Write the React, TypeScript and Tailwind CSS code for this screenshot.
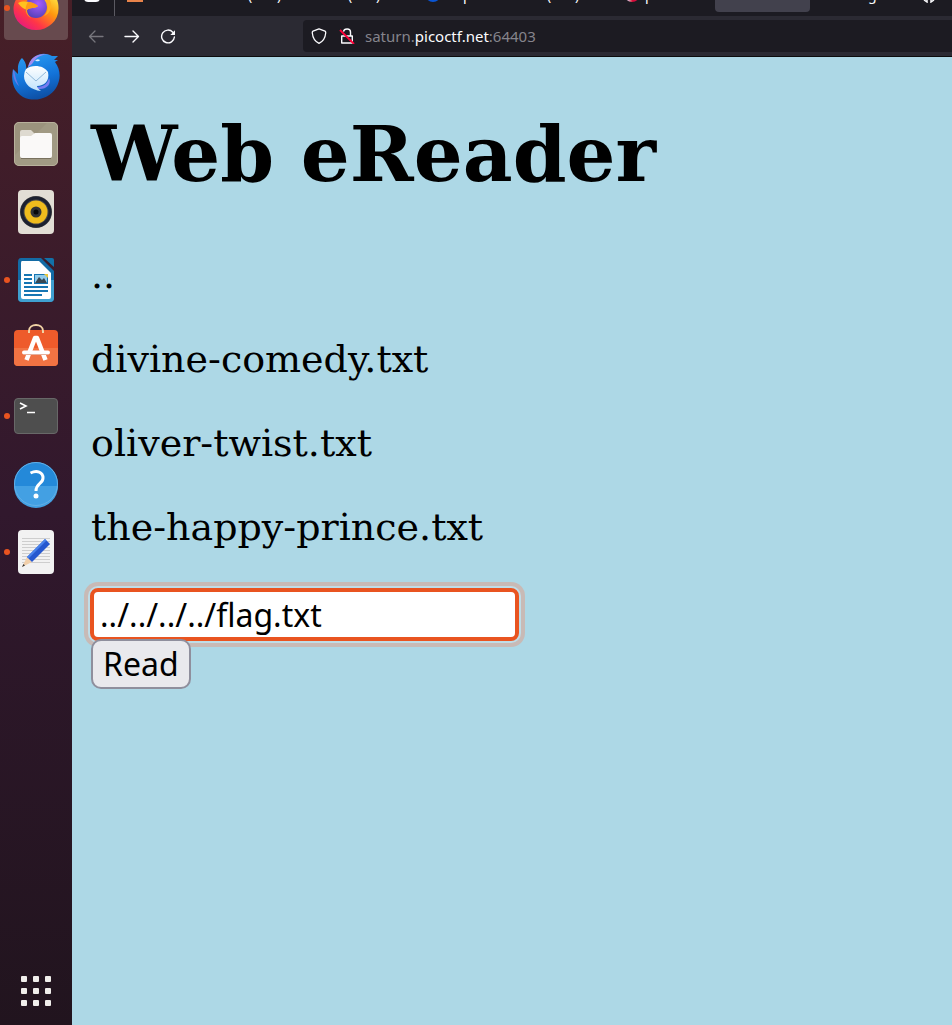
import type { ReactNode } from "react";

type TabMark = { left: string; text: string };

const tabMarks: TabMark[] = [
  { left: "left-[176px]", text: "(" },
  { left: "left-[205px]", text: ")" },
  { left: "left-[276px]", text: "(" },
  { left: "left-[304px]", text: ")" },
  { left: "left-[391px]", text: "p" },
  { left: "left-[475px]", text: "(" },
  { left: "left-[503px]", text: ")" },
  { left: "left-[573px]", text: "p" },
  { left: "left-[796px]", text: "g" },
];

function TabStrip() {
  return (
    <div className="relative h-4 shrink-0 overflow-hidden bg-[#1c1b22] font-['Noto_Sans',sans-serif] text-sm text-[#fbfbfe]">
      <span className="absolute -top-2 left-3 h-[10px] w-4 rounded-sm border-2 border-[#fbfbfe] bg-[#85848c]" />
      <span className="absolute left-[42px] top-0 h-4 w-px bg-[#5b5a62]" />
      <span className="absolute left-[55px] top-0 h-[2px] w-4 bg-[#e8834a]" />
      <span className="absolute -top-[14px] left-[353px] size-4 rounded-full bg-[#0a55d4]" />
      <span className="absolute -top-[14px] left-[552px] size-4 rounded-full bg-linear-to-r from-[#d9a7c4] from-30% to-[#d80b3c] to-50%" />
      <span className="absolute -top-3 left-[643px] h-6 w-[95px] rounded bg-[#42414d]" />
      <svg className="absolute left-[850px] top-0" width="16" height="3" aria-hidden="true">
        <path d="M2 0L5 2V0M9 0V2L12 0" stroke="#fbfbfe" strokeWidth="1.500" fill="none" />
      </svg>
      {tabMarks.map((mark) => (
        <span key={mark.left} className={`absolute -top-[15px] leading-5 ${mark.left}`}>
          {mark.text}
        </span>
      ))}
    </div>
  );
}

function Toolbar() {
  return (
    <nav className="flex h-10 shrink-0 items-center bg-[#2b2a33] text-[#fbfbfe]">
      <button aria-label="Back" className="ml-4 flex size-4 items-center justify-center text-[#77767d]">
        <svg width="16" height="16" fill="none" stroke="currentColor" strokeWidth="1.3" strokeLinecap="round" strokeLinejoin="round">
          <path d="M15 8.500H1.500M7 3L1.500 8.500L7 14" />
        </svg>
      </button>
      <button aria-label="Forward" className="ml-5 flex size-4 items-center justify-center">
        <svg width="16" height="16" fill="none" stroke="currentColor" strokeWidth="1.400" strokeLinecap="round" strokeLinejoin="round">
          <path d="M1 8.500H14.500M9 3L14.500 8.500L9 14" />
        </svg>
      </button>
      <button aria-label="Reload" className="ml-5 flex size-4 items-center justify-center">
        <svg width="16" height="16" fill="none" stroke="currentColor" strokeWidth="1.400" strokeLinecap="round">
          <path d="M12.800 4.200A6.400 6.400 0 1 0 14.400 9" />
          <path d="M15 2.300V6.500a.5.500 0 0 1-.5.500H10.300z" fill="currentColor" stroke="none" />
        </svg>
      </button>
      <div className="ml-[127px] flex h-8 flex-1 items-center rounded-l bg-[#1c1b22] pl-2">
        <svg width="16" height="16" fill="none" stroke="currentColor" strokeWidth="1.300" strokeLinejoin="round" aria-hidden="true">
          <path d="M8 .8L14 3.200C14.800 3.600 14.800 4 14.700 5C14.300 9.500 12 13.500 8 15.300C4 13.500 1.700 9.500 1.300 5C1.200 4 1.200 3.600 2 3.200Z" />
        </svg>
        <svg className="ml-3" width="16" height="16" fill="none" stroke="currentColor" strokeWidth="1.400" strokeLinejoin="round" aria-hidden="true">
          <path d="M4.500 3.700C5 0 11.500 0 11.500 4V8M2.700 8H13.300V15H2.700Z" />
          <path d="M1 2L15 16" stroke="#ff0039" strokeWidth="1.800" />
        </svg>
        <p className="ml-[10px] font-['Noto_Sans',sans-serif] text-[15px] text-[#85848c]">
          saturn.<span className="text-[#fbfbfe]">picoctf.net</span>:64403
        </p>
      </div>
    </nav>
  );
}

function FirefoxIcon() {
  return (
    <svg width="48" height="48" viewBox="0 0 48 48" aria-hidden="true">
      <defs>
        <linearGradient id="ff-body" x1="1" y1="0" x2="0.200" y2="1">
          <stop offset="0.100" stopColor="#fff44f" />
          <stop offset="0.450" stopColor="#ff980e" />
          <stop offset="0.750" stopColor="#ff3647" />
          <stop offset="1" stopColor="#e31587" />
        </linearGradient>
        <radialGradient id="ff-core" cx="0.600" cy="0.350" r="0.700">
          <stop offset="0" stopColor="#a75cff" />
          <stop offset="1" stopColor="#5340b5" />
        </radialGradient>
      </defs>
      <path d="M24 3C38 2 47 12 46.500 25A22.500 21 0 0 1 1.500 25C1.500 16 8 6 24 3Z" fill="url(#ff-body)" />
      <circle cx="24" cy="23" r="11" fill="url(#ff-core)" />
      <path d="M26 12C36 12 39 25 32 32C40 29 42 18 34 11Z" fill="#ffb01f" />
      <path d="M6 19C12 16 20 18 26 22C23 25 18 23 15 26C12 25 9 23 6 19Z" fill="#ffc21f" />
      <path d="M15 26C18 23 22 25 26 22C24 20 20 18 16 18C12 24 13 31 19 34C16 31 15 29 15 26Z" fill="#ff9a18" />
    </svg>
  );
}

function ThunderbirdIcon() {
  return (
    <svg width="48" height="48" viewBox="0 0 48 48" aria-hidden="true">
      <defs>
        <linearGradient id="tb-body" x1="0.300" y1="0" x2="0.600" y2="1">
          <stop stopColor="#2a9cf2" />
          <stop offset="0.550" stopColor="#1373d9" />
          <stop offset="1" stopColor="#0d4da1" />
        </linearGradient>
        <linearGradient id="tb-mail" x1="0" y1="0" x2="0" y2="1">
          <stop stopColor="#fff" />
          <stop offset="1" stopColor="#bfe2fc" />
        </linearGradient>
      </defs>
      <path d="M10 6C5 11 6 17 6 22L1 17C-1 27 0 38 11 45C23 51 38 46 44 36C49 28 49 18 43 10L46 8H42L46 4H40C31 -1 20 3 17 13L14 18C15 13 13 9 10 6Z" fill="url(#tb-body)" />
      <path d="M16 15C18 5 26 0 38 3C30 2 25 4 20 12Z" fill="#a18cf0" />
      <path d="M1 19C1 25 3 31 7 34C4 29 3 23 2 18Z" fill="#6c7ae6" />
      <path d="M25 35C32 35 36 31 37 26C40 32 34 38 26 37Z" fill="#757cf0" />
      <path d="M14 17C20 12 32 13 36 20C38 29 32 34 25 34Q25 36 29 39C19 38 12 32 12 24Q12 20 14 17Z" fill="url(#tb-mail)" />
      <path d="M14 20L24 29L34 20" fill="none" stroke="#90b8d9" />
      <path d="M23 9Q25 6 28 8Q27 10 24 9" fill="#d8f0ff" />
    </svg>
  );
}

function FilesIcon() {
  return (
    <svg width="48" height="48" viewBox="0 0 48 48" aria-hidden="true">
      <rect x="2" y="2" width="44" height="44" rx="5" fill="#9b937d" />
      <path d="M3 35L35 3H41A4 4 0 0 1 45 7V41A4 4 0 0 1 41 45H7A4 4 0 0 1 3 41Z" fill="#a19a84" />
      <rect x="2.500" y="2.500" width="43" height="43" rx="4.500" fill="none" stroke="#b8b19c" />
      <path d="M8 12a2 2 0 0 1 2-2h9l4 4v8H8Z" fill="#dedad0" />
      <path d="M8 18q0-2 2-2h9l4-3h15q2 0 2 2v21q0 2-2 2H10q-2 0-2-2Z" fill="#faf9f8" />
      <path d="M9 38.500H39" stroke="#79725f" />
    </svg>
  );
}

function SpeakerIcon() {
  return (
    <svg width="48" height="48" viewBox="0 0 48 48" aria-hidden="true">
      <rect x="6" y="2" width="36" height="44" rx="4" fill="#e2ded5" />
      <circle cx="24" cy="24" r="16" fill="#4a4947" />
      <circle cx="24" cy="24" r="14" fill="none" stroke="#1c2130" strokeWidth="3" />
      <circle cx="24" cy="24" r="11.500" fill="#efbc1d" />
      <circle cx="24" cy="24" r="5.500" fill="#303235" />
      <circle cx="24" cy="24" r="2.500" fill="#08090a" />
    </svg>
  );
}

function WriterIcon() {
  return (
    <svg width="48" height="48" viewBox="0 0 48 48" aria-hidden="true">
      <path d="M9 2H29L42 15V42a4 4 0 0 1-4 4H10a4 4 0 0 1-4-4V6Q6 2 9 2Z" fill="#136ba5" />
      <path d="M6 24H42V42a4 4 0 0 1-4 4H10a4 4 0 0 1-4-4Z" fill="#3fa0d0" />
      <path d="M10 5H27L39 17V41q0 2-2 2H11q-2 0-2-2V7q0-2 1-2Z" fill="#fff" />
      <path d="M32 2H40q2 0 2 2v7Z" fill="#1271a8" />
      <path d="M12 19h8M12 23h8M12 27h8M12 31h24M12 35h24M12 39h18" stroke="#1676b3" strokeWidth="2" />
      <rect x="22.500" y="18.500" width="13" height="9" fill="#91cceb" stroke="#1676b3" />
      <path d="M23 27L27 21L30 24L32 22L35 27Z" fill="#394852" />
      <path d="M32 18H36V22Z" fill="#e8c638" />
    </svg>
  );
}

function SoftwareIcon() {
  return (
    <svg width="48" height="48" viewBox="0 0 48 48" aria-hidden="true">
      <rect x="2" y="6" width="44" height="36" rx="4" fill="#ee5b2b" />
      <path d="M2 24H46V38a4 4 0 0 1-4 4H6a4 4 0 0 1-4-4Z" fill="#f17343" />
      <path d="M17 9V7C17-1 31-1 31 7V9" fill="none" stroke="#f1d3a5" strokeWidth="2" />
      <path d="M14.500 36L23 14H25L33.500 36" fill="none" stroke="#fff" strokeWidth="4.500" strokeLinejoin="round" />
      <path d="M12 28.500H36" stroke="#fff" strokeWidth="4" strokeLinecap="round" />
      <path d="M12 30.500H36" stroke="#e5b09c" />
    </svg>
  );
}

function TerminalIcon() {
  return (
    <svg width="48" height="48" viewBox="0 0 48 48" aria-hidden="true">
      <rect x="2.500" y="6.500" width="43" height="35" rx="3.500" fill="#4e4e4e" stroke="#686868" />
      <path d="M8 11L14 14L8 17M15 20.500H23" fill="none" stroke="#fff" strokeWidth="1.600" />
    </svg>
  );
}

function HelpIcon() {
  return (
    <svg width="48" height="48" viewBox="0 0 48 48" aria-hidden="true">
      <circle cx="24" cy="24" r="22" fill="#2489d9" />
      <path d="M2 26H46A22 22 0 0 1 2 26Z" fill="#43a0e3" />
      <circle cx="24" cy="24" r="21.500" fill="none" stroke="#63b0e6" />
      <path d="M18.500 13C25 10 31 12 31 18C31 24 24 23 24 31" fill="none" stroke="#fff" strokeWidth="3" />
      <circle cx="24" cy="36" r="2.500" fill="#fff" />
    </svg>
  );
}

function EditorIcon() {
  return (
    <svg width="48" height="48" viewBox="0 0 48 48" aria-hidden="true">
      <rect x="6" y="2" width="36" height="44" rx="4" fill="#f2f2f2" />
      <path d="M10 10.500H38M10 13.500H38M10 16.500H38M10 19.500H38M10 22.500H38M10 25.500H38M10 28.500H38M10 31.500H38M10 34.500H38" stroke="#cecece" />
      <path d="M10 39L15 29L20 34Z" fill="#f1cfaa" />
      <path d="M10 39L11.500 36L13 37.500Z" fill="#343434" />
      <path d="M15 29L33 11L38 16L20 34Z" fill="#2658cf" />
      <path d="M15 29L33 11L34.500 12.500L16.500 30.500Z" fill="#4a83ec" />
    </svg>
  );
}

type DockItem = { name: string; icon: ReactNode; running?: boolean; active?: boolean };

const dockItems: DockItem[] = [
  { name: "Firefox", icon: <FirefoxIcon />, running: true, active: true },
  { name: "Thunderbird", icon: <ThunderbirdIcon /> },
  { name: "Files", icon: <FilesIcon /> },
  { name: "Rhythmbox", icon: <SpeakerIcon /> },
  { name: "LibreOffice Writer", icon: <WriterIcon />, running: true },
  { name: "Ubuntu Software", icon: <SoftwareIcon /> },
  { name: "Terminal", icon: <TerminalIcon />, running: true },
  { name: "Help", icon: <HelpIcon /> },
  { name: "Text Editor", icon: <EditorIcon />, running: true },
];

function Dock() {
  return (
    <aside className="flex w-[72px] shrink-0 flex-col items-center bg-linear-to-b from-[#471f27] via-[#31182d] via-50% to-[#21141e]">
      <div className="-mt-6 flex flex-col gap-1">
        {dockItems.map((item) => (
          <button
            key={item.name}
            aria-label={item.name}
            className={`relative flex size-16 items-center justify-center rounded ${item.active ? "bg-[#674a4e]" : ""}`}
          >
            {item.running && <span className="absolute left-0 top-[29px] size-[6px] rounded-full bg-[#e95420]" />}
            {item.icon}
          </button>
        ))}
      </div>
      <button aria-label="Show Applications" className="mb-[19px] mt-auto grid grid-cols-3 gap-[6px]">
        {Array.from({ length: 9 }, (_, i) => (
          <span key={i} className="size-[6px] rounded-[1px] bg-[#f0eeeb]" />
        ))}
      </button>
    </aside>
  );
}

const books = ["..", "divine-comedy.txt", "oliver-twist.txt", "the-happy-prince.txt"];

function Reader() {
  return (
    <main className="flex-1 px-[19px] pt-[52px] font-['DejaVu_Serif',serif] text-black">
      <h1 className="text-[77px] font-bold leading-[90px]">Web eReader</h1>
      <ul className="mt-[53px] flex flex-col gap-[38px] text-[38px] leading-[46px]">
        {books.map((book) => (
          <li key={book}>{book}</li>
        ))}
      </ul>
      <form className="mt-[38px] flex flex-col items-start font-['Noto_Sans',sans-serif] text-[32px]" onSubmit={(e) => e.preventDefault()}>
        <input
          aria-label="File"
          defaultValue="../../../../flag.txt"
          className="-ml-px h-[53px] w-[429px] max-w-full rounded-lg border-4 border-[#e95420] bg-white px-[6px] shadow-[0_0_0_2px_#bfdde8,0_0_0_6px_#c8bab6] outline-none"
        />
        <button className="relative -mt-[2px] h-[50px] rounded-[10px] border-2 border-[#8f8f9d] bg-[#e9e9ed] px-[10px] leading-[46px]">Read</button>
      </form>
    </main>
  );
}

export default function App() {
  return (
    <div className="flex min-h-screen bg-[#add8e6]">
      <Dock />
      <div className="flex min-w-0 flex-1 flex-col">
        <TabStrip />
        <Toolbar />
        <div className="h-px bg-[#0c0c0d]" />
        <Reader />
      </div>
    </div>
  );
}
